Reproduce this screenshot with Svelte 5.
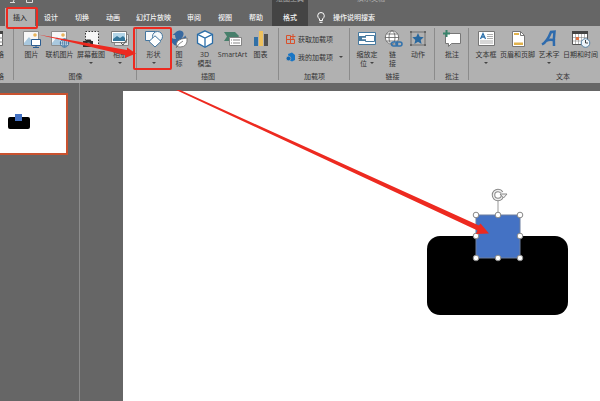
<script lang="ts">
	import type { Snippet } from "svelte";

	const tabs = ["插入", "设计", "切换", "动画", "幻灯片放映", "审阅", "视图", "帮助"];
	let active = $state("插入");

	// resize handles of the selected square
	const handles = [
		[353, 124], [375, 124], [397, 124],
		[353, 145], [397, 145],
		[353, 167], [375, 167], [397, 167],
	];
</script>

{#snippet tool(icon: Snippet, lines: string[], size: string, menu: boolean)}
	<button class="tool {size}">
		<svg class="icon" viewBox="0 0 20 18" aria-hidden="true">{@render icon()}</svg>
		{#each lines as line, i}
			<span class="line">
				{line}{#if menu && i > 0}<i class="caret inline"></i>{/if}
			</span>
		{/each}
		{#if menu && lines.length === 1}<i class="caret"></i>{/if}
	</button>
{/snippet}

{#snippet picture()}
	<path d="M1.5 1.5h15v14h-15z" fill="#f7f7f7" stroke="#8d8d8d" />
	<circle cx="13" cy="5" r="1.8" fill="#e9b45c" />
	<path d="M2 13l5-6 5 6v2H2z" fill="#a9c8de" />
{/snippet}

{#snippet photo()}
	{@render picture()}
	<path d="M9.5 9.5h9v6h-9z" fill="#fff" stroke="#2b5d91" />
	<path d="M14 16v1.5M11 17.5h6" stroke="#2b5d91" fill="none" />
{/snippet}

{#snippet onlinePhoto()}
	{@render picture()}
	<circle cx="14.5" cy="13" r="4.2" fill="#e9f1f8" stroke="#3d719f" />
	<path d="M10.5 13h8M14.5 9v8M11.500 10.8h6M11.500 15.2h6" stroke="#3d719f" stroke-width=".7" />
	<ellipse cx="14.5" cy="13" rx="2" ry="4" fill="none" stroke="#3d719f" stroke-width=".7" />
{/snippet}

{#snippet screenshot()}
	<path d="M4.5 1.5h13v14h-13z" fill="#f7f7f7" stroke="#333" stroke-dasharray="1.5 1.5" />
	<path d="M2 11h2.5l1-1.5h4l1 1.5H12v6H2z" fill="#2f2f2f" />
	<circle cx="7.5" cy="14" r="1.8" fill="#777" />
{/snippet}

{#snippet album()}
	<path d="M4.5 4.5h14v11h-14z" fill="#e9e9e9" stroke="#888" />
	<path d="M1.5 1.5h15v11h-15z" fill="#fff" stroke="#7a7a7a" />
	<path d="M3 3h12v8H3z" fill="#b3d5e8" />
	<path d="M3 9l4-3 3 2 3-2 2 2v3H3z" fill="#34769a" />
	<path d="M11 13l2 2 4-6" fill="none" stroke="#555" />
{/snippet}

{#snippet shapes()}
	<path d="M1.5 1.5h10v9h-10z" fill="#f7fafc" stroke="#44769f" />
	<circle cx="13.5" cy="6.5" r="5" fill="#f7fafc" stroke="#44769f" />
	<path d="M11 5.8l6 5.6-6 5.6-6-5.6z" fill="#fff" stroke="#44769f" />
{/snippet}

{#snippet bird()}
	<path d="M6 3Q8 0 11 .5q4 .5 3.500 4-.3 2-2 3.500 2.500-.5 4-2.500 1.500 4-.5 7-3 4-8 3.500-6-1-6-8.500 2 1.500 5 1.500Q6 7 6 5H3.500z" fill="#3869a0" />
	<path d="M8 17q-3-8 10-9 1 9-7 9-2 0-3-1z" fill="#fff" stroke="#6b6b6b" stroke-width=".8" />
	<path d="M7 18q3-5 7-7" fill="none" stroke="#6b6b6b" stroke-width=".8" />
{/snippet}

{#snippet cube()}
	<path d="M10 .8l7.5 3.5v8.8L10 17.2l-7.5-4.1V4.3z" fill="#fff" stroke="#2b6ea8" stroke-width="1.3" />
	<path d="M2.5 4.3L10 8l7.5-3.7M10 8v9" fill="none" stroke="#2b6ea8" stroke-width="1.3" />
{/snippet}

{#snippet smartArt()}
	<path d="M1 2h11l4 4-3 5H1l3-4.5z" fill="#477f6b" />
	<path d="M6.5 7.5h12v8h-12z" fill="#fff" stroke="#858585" />
	<path d="M8 10h1M10 10h7M8 13h1M10 13h7" stroke="#858585" />
{/snippet}

{#snippet chart()}
	<path d="M3 7h4v9H3z" fill="#3170a6" />
	<path d="M8 1h4v15H8z" fill="#edc05d" />
	<path d="M13 4h4v12h-4z" fill="#505050" />
{/snippet}

{#snippet zoomLink()}
	<path d="M1.5 2.5h17v12h-17z" fill="#fff" stroke="#46799f" />
	<path d="M2 6h6v5H2z" fill="#46799f" />
	<path d="M8.5 5.5h9v6h-9z" fill="#fff" stroke="#46799f" />
	<path d="M5 8.5h4" stroke="#fff" stroke-width="1.5" />
{/snippet}

{#snippet link()}
	<circle cx="9" cy="7.5" r="6.7" fill="#fff" stroke="#606060" stroke-width=".8" />
	<ellipse cx="9" cy="7.5" rx="3" ry="6.7" fill="none" stroke="#606060" stroke-width=".8" />
	<path d="M2 7.5h14M3.500 4h11M3.500 11h11" stroke="#606060" stroke-width=".8" />
	<rect x="8.5" y="12" width="6" height="4" rx="2" fill="none" stroke="#3272ac" stroke-width="1.5" />
	<rect x="13" y="12" width="6" height="4" rx="2" fill="none" stroke="#3272ac" stroke-width="1.5" />
{/snippet}

{#snippet action()}
	<path d="M3 2h14v13H3z" fill="none" stroke="#555" stroke-width=".7" />
	<path d="M2 1h2v2H2zM16 1h2v2h-2zM2 14h2v2H2zM16 14h2v2h-2z" fill="#666" />
	<path d="M10 3l1.700 3.800 4 .4-3 2.700.9 4L10 11.800l-3.600 2.100.9-4-3-2.700 4-.4z" fill="#28689f" />
{/snippet}

{#snippet comment()}
	<path d="M3.500 3.500h15v10h-9l-3 3v-3h-3z" fill="#fff" stroke="#777" />
	<path d="M4.500 0v7M1 3.500h7" stroke="#39836b" stroke-width="2" />
{/snippet}

{#snippet textBox()}
	<path d="M2.500 1.500h16v14h-16z" fill="#fff" stroke="#777" />
	<path d="M4.500 9L7 3.500 9.500 9M5.500 7h3" fill="none" stroke="#2d70aa" stroke-width="1.3" />
	<path d="M11 4.500h6M11 6.500h6M11 8.500h6M4 11h13M4 13h13" stroke="#999" stroke-width=".8" />
{/snippet}

{#snippet footer()}
	<path d="M4.500 1.500h8l4 4v11h-12z" fill="#fff" stroke="#777" />
	<path d="M12.500 1.500v4h4" fill="none" stroke="#777" />
	<path d="M6 3h5v2H6zM6 12.500h9V15H6z" fill="#e1b24c" />
{/snippet}

{#snippet wordArt()}
	<path d="M3 14.500Q8 12 12 2l3.500-.3q-1 7-.5 14.300M7 11q4-2 9-.5" fill="none" stroke="#2e6bad" stroke-width="2.5" />
{/snippet}

{#snippet date()}
	<path d="M1.500 1.500h15v13h-15z" fill="#fff" stroke="#555" />
	<path d="M1 1h16v3H1z" fill="#444" />
	<path d="M4.500 4v10M7.500 4v10M10.500 4v10M13.500 4v10M2 7.500h14M2 11h14" stroke="#888" stroke-width=".6" />
	<path d="M5 7h3v3H5z" fill="#e17344" />
	<circle cx="14.500" cy="13" r="4.300" fill="#eef5fa" stroke="#5682a4" />
	<path d="M14.500 10v3h2.500" fill="none" stroke="#444" />
{/snippet}

<div class="app">
	<header>
		<div class="title">
			<svg class="quick" viewBox="0 0 40 8" aria-hidden="true">
				<path d="M10 2.500h5M14 0l-1 2.500M26.500 0v2.500h6V0" fill="none" stroke="#ddd" />
			</svg>
			<span class="context">绘图工具</span>
			<span>演示文稿</span>
		</div>
		<nav>
			{#each tabs as tab}
				<button
					class="tab"
					class:active={active === tab}
					class:long={tab.length > 2}
					onclick={() => (active = tab)}
				>{tab}</button>
			{/each}
			<button class="tab format">格式</button>
			<button class="tab search">
				<svg class="bulb" viewBox="0 0 8 11" aria-hidden="true">
					<path d="M2.500 7Q.7 5.500.7 3.800a3.300 3.300 0 016.600 0Q7.300 5.500 5.500 7v1.500h-3zM2.500 10.300h3" fill="none" stroke="#fff" />
				</svg>
				操作说明搜索
			</button>
		</nav>
	</header>

	<div class="ribbon">
		<section class="group tables">
			<div class="tools">
				<button class="tool table">
					<svg class="icon" viewBox="0 0 20 18" aria-hidden="true">
						<path d="M1.500 1.500h17v14h-17z" fill="#fff" stroke="#666" />
						<path d="M1 1h18v3H1z" fill="#444" />
						<path d="M1 8h18M1 12h18M7 4v11M13 4v11" stroke="#888" />
					</svg>
					<span class="line">表格</span>
				</button>
			</div>
			<h2>表格</h2>
		</section>
		<section class="group images">
			<div class="tools">
				{@render tool(photo, ["图片"], "medium", false)}
				{@render tool(onlinePhoto, ["联机图片"], "medium", false)}
				{@render tool(screenshot, ["屏幕截图"], "wide", true)}
				{@render tool(album, ["相册"], "narrow", true)}
			</div>
			<h2>图像</h2>
		</section>
		<section class="group art">
			<div class="tools">
				{@render tool(shapes, ["形状"], "medium", true)}
				{@render tool(bird, ["图", "标"], "narrow", false)}
				{@render tool(cube, ["3D", "模型"], "medium", false)}
				{@render tool(smartArt, ["SmartArt"], "medium", false)}
				{@render tool(chart, ["图表"], "medium", false)}
			</div>
			<h2>插图</h2>
		</section>
		<section class="group addins">
			<div class="rows">
				<button class="row">
					<svg class="small" viewBox="0 0 10 10" aria-hidden="true">
						<path d="M.5 1.500h4v8h-4zM.5 5.500h8v4h-4M7 0v5M4.500 2.500h5" fill="none" stroke="#d8512c" />
					</svg>
					获取加载项
				</button>
				<button class="row">
					<svg class="small" viewBox="0 0 10 10" aria-hidden="true">
						<path d="M2 2l4-1.500L9 3v5L6 9.500 3 8z" fill="#1976c5" />
						<circle cx="2.500" cy="6.500" r="2.300" fill="#1467b0" stroke="#b1b1b1" stroke-width=".6" />
					</svg>
					我的加载项
					<i class="caret side"></i>
				</button>
			</div>
			<h2>加载项</h2>
		</section>
		<section class="group links">
			<div class="tools">
				{@render tool(zoomLink, ["缩放定", "位"], "medium", true)}
				{@render tool(link, ["链", "接"], "narrow", false)}
				{@render tool(action, ["动作"], "medium", false)}
			</div>
			<h2>链接</h2>
		</section>
		<section class="group comments">
			<div class="tools">
				{@render tool(comment, ["批注"], "medium", false)}
			</div>
			<h2>批注</h2>
		</section>
		<section class="group text">
			<div class="tools">
				{@render tool(textBox, ["文本框"], "medium", true)}
				{@render tool(footer, ["页眉和页脚"], "wide", false)}
				{@render tool(wordArt, ["艺术字"], "medium", true)}
				{@render tool(date, ["日期和时间"], "wide", false)}
			</div>
			<h2>文本</h2>
		</section>
	</div>

	<main>
		<aside>
			<button class="thumb" aria-label="幻灯片 1">
				<svg viewBox="0 0 66 58" aria-hidden="true">
					<rect x="8" y="22" width="22" height="12" rx="2" />
					<rect x="15" y="19" width="7" height="7" fill="#4472c4" />
				</svg>
			</button>
		</aside>
		<div class="slide">
			<svg class="drawing" viewBox="0 0 477 310" aria-hidden="true">
				<rect x="304" y="145" width="141" height="79" rx="13" />
				<rect x="353" y="124" width="44" height="43" fill="#4472c4" stroke="#6d7f9f" />
				<path d="M375 124v-14" stroke="#999" />
				<circle cx="375" cy="104" r="4.500" fill="none" stroke="#888" stroke-width="3.500" stroke-dasharray="25 4" />
				<circle cx="375" cy="104" r="4.500" fill="none" stroke="#eee" stroke-width="1.500" stroke-dasharray="25 4" />
				<path d="M377 103h7l-3.500 4z" fill="#eee" stroke="#888" />
				{#each handles as [x, y]}
					<circle cx={x} cy={y} r="2.800" fill="#fff" stroke="#888" />
				{/each}
			</svg>
		</div>
	</main>

	<svg class="marks" viewBox="0 0 600 401" aria-hidden="true">
		<rect x="7" y="8" width="30" height="20" rx="1" />
		<rect x="134" y="28" width="37" height="41" rx="1" />
		<path class="arrow" d="M38 34.500L127 50V47.500L136 53.500L125 58V55Z" />
		<path class="arrow" d="M176 90H180L479 225.500L480.500 223.500L489 233.500L476 234L477.500 230.500Z" />
	</svg>
</div>

<style>
	:global(body) {
		margin: 0;
	}

	.app {
		position: relative;
		display: flex;
		flex-direction: column;
		min-height: 100vh;
		overflow: hidden;
		background: #666;
		font-family: "Open Sans", "Noto Sans CJK SC", sans-serif;
		font-size: 7px;
		line-height: 9px;
		color: #333;
	}

	button {
		margin: 0;
		padding: 0;
		border: 0;
		background: none;
		font: inherit;
		color: inherit;
		white-space: nowrap;
	}

	.title {
		position: relative;
		z-index: 1;
		display: flex;
		height: 8px;
		color: #aaa;
		pointer-events: none;
	}

	.title span {
		margin-top: -6px;
	}

	.title .context {
		margin-left: 236px;
		margin-right: 53px;
	}

	.quick {
		display: block;
		width: 40px;
		height: 8px;
	}

	nav {
		display: flex;
		gap: 1px;
		height: 18px;
		padding-left: 5px;
	}

	.tab {
		padding: 0 8px;
		color: #f4f4f4;
		font-weight: 500;
	}

	.tab.long {
		padding: 0 7px;
	}

	.tab.active {
		background: #b1b1b1;
		color: #333;
	}

	.tab.format {
		width: 36px;
		margin-top: -8px;
		padding-top: 8px;
		background: #444;
	}

	.tab.search {
		display: flex;
		align-items: center;
		gap: 8px;
	}

	.bulb {
		width: 8px;
		height: 11px;
	}

	.ribbon {
		display: flex;
		height: 57px;
		background: #b1b1b1;
	}

	.group {
		position: relative;
		display: flex;
		flex: none;
		flex-direction: column;
		justify-content: space-between;
		box-sizing: border-box;
		padding: 4px 0 2px;
	}

	.group::after {
		content: "";
		position: absolute;
		top: 2px;
		right: 0;
		bottom: 3px;
		border-right: 1px solid #8b8b8b;
	}

	.tables {
		width: 14px;
		overflow: hidden;
	}

	.tables .tools,
	.tables h2 {
		align-self: flex-end;
		padding-right: 10px;
	}

	.tables .table {
		align-items: flex-end;
	}

	.images {
		width: 123px;
	}

	.art {
		width: 142px;
	}

	.addins {
		width: 71px;
	}

	.links {
		width: 85px;
	}

	.comments {
		width: 34px;
	}

	.text {
		width: 188px;
	}

	.text .tools {
		justify-content: flex-start;
		padding-left: 3px;
	}

	.tools {
		display: flex;
		justify-content: center;
	}

	.images .tools,
	.art .tools {
		padding-right: 2px;
	}

	.tool {
		display: flex;
		flex-direction: column;
		align-items: center;
	}

	.narrow {
		width: 23px;
	}

	.medium {
		width: 28px;
	}

	.wide {
		width: 35px;
	}

	.icon {
		width: 20px;
		height: 18px;
		margin-bottom: 2px;
	}

	h2 {
		margin: 0;
		font: inherit;
		text-align: center;
		white-space: nowrap;
	}

	.caret {
		width: 0;
		margin-top: 3px;
		border: 2px solid transparent;
		border-top-color: #444;
		border-bottom: 0;
	}

	.caret.inline {
		display: inline-block;
		margin: 0 0 2px 3px;
	}

	.caret.side {
		margin: 0 0 0 4px;
	}

	.rows {
		display: flex;
		flex-direction: column;
		gap: 8px;
		padding: 4px 0 0 7px;
	}

	.row {
		display: flex;
		align-items: center;
		gap: 2px;
	}

	.small {
		width: 10px;
		height: 10px;
	}

	main {
		display: flex;
		flex: 1;
	}

	aside {
		width: 79px;
		padding-top: 10px;
		border-right: 1px solid #8b8b8b;
	}

	.thumb {
		display: block;
		border: 2px solid #c9522f;
		border-left: 0;
		background: #fff;
	}

	.thumb svg {
		display: block;
		width: 66px;
		height: 58px;
	}

	.slide {
		flex: 1;
		margin: 8px 0 0 43px;
		background: #fff;
	}

	.drawing {
		display: block;
		width: 477px;
		height: 310px;
	}

	.marks {
		position: absolute;
		top: 0;
		left: 0;
		width: 600px;
		height: 401px;
		fill: none;
		stroke: #ed2a20;
		stroke-width: 2;
		pointer-events: none;
	}

	.arrow {
		fill: #ed2a20;
		stroke: none;
	}
</style>
